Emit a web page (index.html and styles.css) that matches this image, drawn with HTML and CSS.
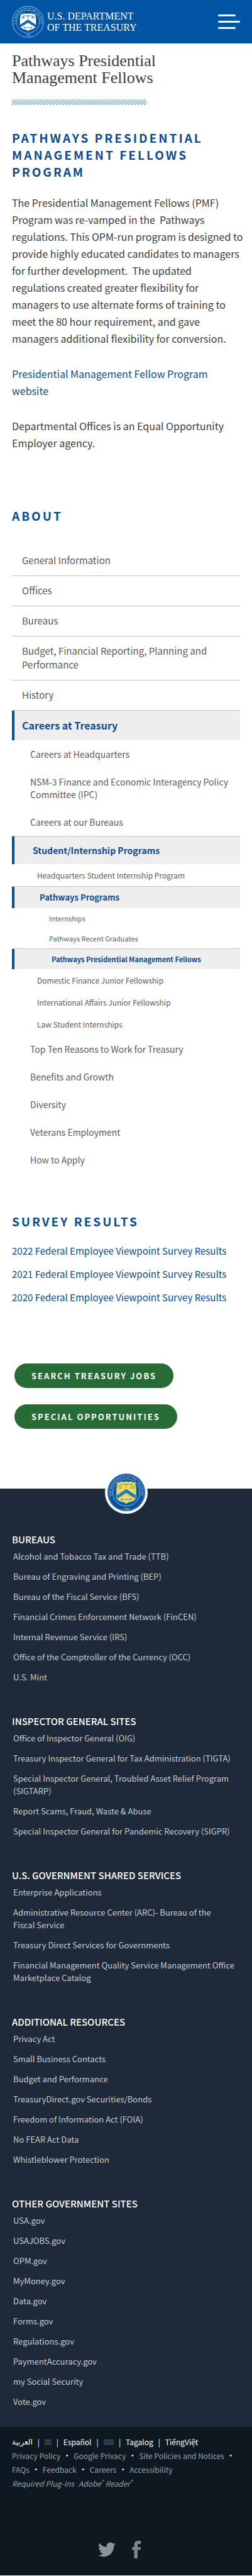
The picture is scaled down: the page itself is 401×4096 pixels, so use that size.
FILE: index.html
```html
<!DOCTYPE html>
<html lang="en">
<head>
<meta charset="utf-8">
<meta name="viewport" content="width=device-width, initial-scale=1">
<title>Pathways Presidential Management Fellows | U.S. Department of the Treasury</title>
<link rel="stylesheet" href="styles.css">
</head>
<body>
<header class="site-header">
  <a class="brand" href="#">
    <svg class="brand-seal" viewBox="0 0 52 52" aria-hidden="true">
      <defs>
        <path id="arc-head" d="M8.400 36.200 A20.300 20.300 0 1 1 43.600 36.200"/>
        <path id="arc-head-foot" d="M14 45.800 A23.200 23.200 0 0 0 38 45.800"/>
      </defs>
      <g fill="none" stroke="#c9dcf0">
        <circle cx="26" cy="26" r="25.2" stroke-width="0.8"/>
        <circle cx="26" cy="26" r="18.600" stroke-width="0.7"/>
      </g>
      <text class="seal-text"><textPath href="#arc-head" startOffset="50%" text-anchor="middle">THE DEPARTMENT OF THE TREASURY</textPath></text>
      <text class="seal-text"><textPath href="#arc-head-foot" startOffset="50%" text-anchor="middle">1789</textPath></text>
      <path fill="#fff" d="M14 13.500 Q17 15 19.500 12.500 Q23 14 26 12.500 Q29 14 32.500 12.500 Q35 15 38 13.500 Q37.500 18 39 20 V30 Q39 37 32 38.500 Q28 39 26 41 Q24 39 20 38.500 Q13 37 13 30 V20 Q14.500 18 14 13.500Z"/>
      <path fill="#0254a5" d="M26 22.500 L39 31 V35.500 L26 27.500 L13 35.500 V31Z"/>
      <path fill="none" stroke="#fff" stroke-width="0.900" stroke-dasharray="1 1.600" d="M13.500 33 L26 25 L38.500 33"/>
      <path fill="none" stroke="#0254a5" stroke-width="0.800" d="M18 16.500H34M26 15V21M18 16.500L16 20.500H20L18 16.500M34 16.500L32 20.500H36L34 16.500M19 35.500H33M20 34V37M32 34.500V37"/>
    </svg>
    <span class="brand-name">U.S. DEPARTMENT<br>OF THE TREASURY</span>
  </a>
  <button class="menu-toggle" type="button" aria-label="Menu">
    <span class="bar bar-short"></span>
    <span class="bar"></span>
    <span class="bar bar-short"></span>
  </button>
</header>

<main class="content">
  <h1 class="page-title">Pathways Presidential Management Fellows</h1>
  <svg class="stripes" aria-hidden="true">
    <defs>
      <pattern id="hatch" width="5" height="9" patternUnits="userSpaceOnUse">
        <path d="M-10 9L3 0M-5 9L8 0M0 9L13 0" stroke="#5b9bd0" stroke-width="1.100"/>
      </pattern>
    </defs>
    <rect width="100%" height="9" fill="url(#hatch)"/>
  </svg>

  <h2 class="section-title">Pathways Presidential Management Fellows Program</h2>
  <div class="prose">
    <p>The Presidential Management Fellows (PMF) Program was re-vamped in the&nbsp; Pathways regulations. This OPM-run program is designed to provide highly educated candidates to managers for further development.&nbsp; The updated regulations created greater flexibility for managers to use alternate forms of training to meet the 80 hour requirement, and gave managers additional flexibility for conversion.</p>
    <p><a href="#">Presidential Management Fellow Program website</a></p>
    <p>Departmental Offices is an Equal Opportunity Employer agency.</p>
  </div>

  <nav class="about" aria-labelledby="about-title">
    <h2 class="section-title" id="about-title">About</h2>
    <ul class="menu">
      <li><a class="l1" href="#">General Information</a></li>
      <li><a class="l1" href="#">Offices</a></li>
      <li><a class="l1" href="#">Bureaus</a></li>
      <li><a class="l1" href="#">Budget, Financial Reporting, Planning and Performance</a></li>
      <li><a class="l1" href="#">History</a></li>
      <li><a class="l1 active" href="#">Careers at Treasury</a>
        <ul>
          <li><a class="l2" href="#">Careers at Headquarters</a></li>
          <li><a class="l2" href="#">NSM-3 Finance and Economic Interagency Policy Committee (IPC)</a></li>
          <li><a class="l2" href="#">Careers at our Bureaus</a></li>
          <li><a class="l2 active" href="#">Student/Internship Programs</a>
            <ul>
              <li><a class="l3" href="#">Headquarters Student Internship Program</a></li>
              <li><a class="l3 active" href="#">Pathways Programs</a>
                <ul>
                  <li><a class="l4" href="#">Internships</a></li>
                  <li><a class="l4" href="#">Pathways Recent Graduates</a></li>
                  <li><a class="l4 active" href="#" aria-current="page">Pathways Presidential Management Fellows</a></li>
                </ul>
              </li>
              <li><a class="l3" href="#">Domestic Finance Junior Fellowship</a></li>
              <li><a class="l3" href="#">International Affairs Junior Fellowship</a></li>
              <li><a class="l3" href="#">Law Student Internships</a></li>
            </ul>
          </li>
          <li><a class="l2" href="#">Top Ten Reasons to Work for Treasury</a></li>
          <li><a class="l2" href="#">Benefits and Growth</a></li>
          <li><a class="l2" href="#">Diversity</a></li>
          <li><a class="l2" href="#">Veterans Employment</a></li>
          <li><a class="l2" href="#">How to Apply</a></li>
        </ul>
      </li>
    </ul>
  </nav>

  <section class="survey">
    <h2 class="section-title">Survey Results</h2>
    <ul class="survey-list">
      <li><a href="#">2022 Federal Employee Viewpoint Survey Results</a></li>
      <li><a href="#">2021 Federal Employee Viewpoint Survey Results</a></li>
      <li><a href="#">2020 Federal Employee Viewpoint Survey Results</a></li>
    </ul>
  </section>

  <div class="actions">
    <a class="pill" href="#">Search Treasury Jobs</a>
    <a class="pill" href="#">Special Opportunities</a>
  </div>
</main>

<footer class="site-footer">
  <svg class="footer-seal" viewBox="0 0 70 70" aria-hidden="true">
    <defs>
      <path id="arc-foot" d="M14.500 48.500 A24.600 24.600 0 1 1 55.500 48.500"/>
      <path id="arc-foot-low" d="M21 60.300 A28.800 28.800 0 0 0 49 60.300"/>
    </defs>
    <circle cx="35" cy="35" r="35" fill="#fff"/>
    <circle cx="35" cy="35" r="31" fill="#0b4f96"/>
    <circle cx="35" cy="35" r="29.800" fill="none" stroke="#8fb8dc" stroke-width="0.600"/>
    <circle cx="35" cy="35" r="22.500" fill="#0f5aa6" stroke="#bcd6ea" stroke-width="0.800"/>
    <text class="seal-text seal-text-lg"><textPath href="#arc-foot" startOffset="50%" text-anchor="middle">THE DEPARTMENT OF THE TREASURY</textPath></text>
    <text class="seal-text seal-text-lg"><textPath href="#arc-foot-low" startOffset="50%" text-anchor="middle">1789</textPath></text>
    <path fill="#ecdc5a" stroke="#7fc0a0" stroke-width="0.700" d="M20 18.500 Q24 20.500 27 17 Q31 19 35 17 Q39 19 43 17 Q46 20.500 50 18.500 Q49.500 24 51 27 V40 Q51 49 42 50.500 Q37.500 51 35 53.500 Q32.500 51 28 50.500 Q19 49 19 40 V27 Q20.500 24 20 18.500Z"/>
    <path fill="#1c66b0" stroke="#8cc4dc" stroke-width="0.700" d="M35 29.500 L51 40 V46 L35 36 L19 46 V40Z"/>
    <path fill="none" stroke="#cde4ee" stroke-dasharray="1.400 2" d="M20 42.500L35 33L50 42.500"/>
    <path fill="none" stroke="#8a8a3c" stroke-width="0.900" d="M25 22H45M35 20V27M25 22L22 28H28L25 22M45 22L42 28H48L45 22"/>
    <path fill="none" stroke="#3e7f9c" stroke-width="1.100" d="M26 46.500H44M27 44.500V48.500M43 45V48"/>
  </svg>

  <div class="link-groups">
    <section>
      <h3>Bureaus</h3>
      <ul>
        <li><a href="#">Alcohol and Tobacco Tax and Trade (TTB)</a></li>
        <li><a href="#">Bureau of Engraving and Printing (BEP)</a></li>
        <li><a href="#">Bureau of the Fiscal Service (BFS)</a></li>
        <li><a href="#">Financial Crimes Enforcement Network (FinCEN)</a></li>
        <li><a href="#">Internal Revenue Service (IRS)</a></li>
        <li><a href="#">Office of the Comptroller of the Currency (OCC)</a></li>
        <li><a href="#">U.S. Mint</a></li>
      </ul>
    </section>
    <section>
      <h3>Inspector General Sites</h3>
      <ul>
        <li><a href="#">Office of Inspector General (OIG)</a></li>
        <li><a href="#">Treasury Inspector General for Tax Administration (TIGTA)</a></li>
        <li><a href="#">Special Inspector General, Troubled Asset Relief Program (SIGTARP)</a></li>
        <li><a href="#">Report Scams, Fraud, Waste &amp; Abuse</a></li>
        <li><a href="#">Special Inspector General for Pandemic Recovery (SIGPR)</a></li>
      </ul>
    </section>
    <section>
      <h3>U.S. Government Shared Services</h3>
      <ul>
        <li><a href="#">Enterprise Applications</a></li>
        <li><a href="#">Administrative Resource Center (ARC)- Bureau of the Fiscal&nbsp;Service</a></li>
        <li><a href="#">Treasury Direct Services for Governments</a></li>
        <li><a href="#">Financial Management Quality Service Management Office Marketplace Catalog</a></li>
      </ul>
    </section>
    <section>
      <h3>Additional Resources</h3>
      <ul>
        <li><a href="#">Privacy Act</a></li>
        <li><a href="#">Small Business Contacts</a></li>
        <li><a href="#">Budget and Performance</a></li>
        <li><a href="#">TreasuryDirect.gov Securities/Bonds</a></li>
        <li><a href="#">Freedom of Information Act (FOIA)</a></li>
        <li><a href="#">No FEAR Act Data</a></li>
        <li><a href="#">Whistleblower Protection</a></li>
      </ul>
    </section>
    <section>
      <h3>Other Government Sites</h3>
      <ul>
        <li><a href="#">USA.gov</a></li>
        <li><a href="#">USAJOBS.gov</a></li>
        <li><a href="#">OPM.gov</a></li>
        <li><a href="#">MyMoney.gov</a></li>
        <li><a href="#">Data.gov</a></li>
        <li><a href="#">Forms.gov</a></li>
        <li><a href="#">Regulations.gov</a></li>
        <li><a href="#">PaymentAccuracy.gov</a></li>
        <li><a href="#">my Social Security</a></li>
        <li><a href="#">Vote.gov</a></li>
      </ul>
    </section>
  </div>
</footer>

<div class="legal">
  <ul class="languages">
    <li><a href="#" lang="ar">العربية</a></li>
    <li><a class="boxes" href="#">▯▯</a></li>
    <li><a href="#" lang="es">Español</a></li>
    <li><a class="boxes" href="#">▯▯▯</a></li>
    <li><a href="#" lang="tl">Tagalog</a></li>
    <li><a href="#" lang="vi">TiếngViệt</a></li>
  </ul>
  <ul class="policies">
    <li><a href="#">Privacy Policy</a></li>
    <li><a href="#">Google Privacy</a></li>
    <li><a href="#">Site Policies and Notices</a></li>
    <li><a href="#">FAQs</a></li>
    <li><a href="#">Feedback</a></li>
    <li><a href="#">Careers</a></li>
    <li><a href="#">Accessibility</a></li>
  </ul>
  <p class="plugins"><span>Required Plug-ins</span> <a href="#">Adobe<sup>®</sup> Reader<sup>®</sup></a></p>
  <div class="social">
    <a href="#" aria-label="Twitter">
      <svg width="28" height="28" viewBox="0 0 24 24" aria-hidden="true"><path fill="#8d9499" d="M23.950 4.570a10 10 0 0 1-2.820.770 4.960 4.960 0 0 0 2.160-2.720c-.950.550-2 .950-3.130 1.180a4.920 4.920 0 0 0-8.380 4.480C7.690 8.090 4.070 6.130 1.640 3.160a4.820 4.820 0 0 0-.670 2.480c0 1.710.870 3.210 2.190 4.100a4.900 4.900 0 0 1-2.230-.620v.060a4.920 4.920 0 0 0 3.950 4.830 5 5 0 0 1-2.210.080 4.940 4.940 0 0 0 4.600 3.420A9.870 9.870 0 0 1 0 19.540a13.990 13.990 0 0 0 7.560 2.210c9.050 0 14-7.500 14-13.980 0-.210 0-.420-.020-.630a9.940 9.940 0 0 0 2.460-2.550z"/></svg>
    </a>
    <a href="#" aria-label="Facebook">
      <svg width="14" height="28" viewBox="0 0 14 28" aria-hidden="true"><path fill="#7b868d" d="M14 0V5H11Q9 5 9 7V10H14L13.500 14.500H9V28H3.500V14.500H0V10H3.500V6.500Q3.500 0 10 0Z"/></svg>
    </a>
  </div>
</div>
</body>
</html>
```
FILE: styles.css
```css
* { box-sizing: border-box; }

body {
  margin: 0;
  background: #fff;
  color: #3d3d3f;
  font-family: "Noto Sans CJK SC", "Open Sans", sans-serif;
  font-size: 15px;
  line-height: 27px;
}

h1, h2, h3, p, ul { margin: 0; padding: 0; }
ul { list-style: none; }
a { color: #0b4c92; text-decoration: none; }

/* Header */
.site-header {
  display: flex;
  align-items: center;
  justify-content: space-between;
  padding: 9px 19px;
  background: #0254a5;
}
.brand { display: flex; align-items: center; gap: 5px; color: #fff; }
.brand-seal { width: 51px; height: 51px; }
.brand-name {
  font-family: "Liberation Serif", serif;
  font-size: 16px;
  line-height: 18px;
}
.seal-text {
  fill: #dbe8f4;
  font-family: "Liberation Serif", serif;
  font-size: 4px;
}
.seal-text-lg { font-size: 5px; }
.menu-toggle {
  display: flex;
  flex-direction: column;
  gap: 7px;
  width: 35px;
  padding: 0;
  border: 0;
  background: none;
}
.bar { width: 100%; height: 3px; border-radius: 2px; background: #fff; }
.bar-short { width: 80%; }

/* Content */
.content { padding: 14px 19px 95px; }
.page-title {
  max-width: 280px;
  color: #3d3d3f;
  font-family: "Liberation Serif", serif;
  font-size: 26px;
  font-weight: 400;
  line-height: 27px;
}
.stripes { display: block; width: 214px; height: 9px; margin: 21px 0 38px; }
.section-title {
  color: #0b4c92;
  font-size: 19px;
  font-weight: 700;
  letter-spacing: 3px;
  line-height: 27px;
  text-transform: uppercase;
}
.prose {
  display: grid;
  gap: 29px;
  margin: 23px -5px 0 0;
  font-size: 16px;
}

/* Side menu */
.about { margin-top: 88px; }
.menu { margin-top: 35px; }
.menu a { display: block; color: #5b5b5d; }
.l1 {
  padding: 12px 16px 13px;
  border-bottom: 1px solid #c3c3c5;
  line-height: 22px;
}
.l2 { padding: 12px 16px 12px 29px; font-size: 14px; line-height: 20px; }
.l3 { padding: 8px 16px 7px 40px; font-size: 12px; line-height: 20px; }
.l4 { padding: 6px 16px 6px 59px; font-size: 11px; line-height: 20px; }
.menu .active {
  border-top: 1px solid #c3c3c5;
  border-bottom: 0;
  background: linear-gradient(to right, #0b4c92 4px, #eee 4px);
  color: #0b4c92;
  font-weight: 700;
}
.l1.active { margin-top: -1px; font-size: 16px; }
.l2.active { padding-left: 33px; }
.l3.active { padding: 7px 16px 7px 44px; font-size: 13px; }
.l4.active { padding-left: 63px; }

/* Survey links and buttons */
.survey { margin-top: 62px; }
.survey-list { display: grid; gap: 10px; margin-top: 20px; }
.actions {
  display: flex;
  flex-direction: column;
  align-items: flex-start;
  gap: 26px;
  margin-top: 92px;
  padding-left: 4px;
}
.pill {
  padding: 6px 27px;
  border-radius: 20px;
  background: #276c34;
  color: #fff;
  font-size: 13px;
  font-weight: 700;
  letter-spacing: 2px;
  text-transform: uppercase;
}

/* Footer */
.site-footer {
  display: flex;
  flex-direction: column;
  padding: 0 19px 30px;
  background: #1e2939;
}
.footer-seal { align-self: center; width: 68px; height: 68px; margin-top: -28px; }
.link-groups { display: grid; gap: 50px; margin-top: 31px; }
.link-groups h3 {
  margin-bottom: 7px;
  color: #fff;
  font-size: 15px;
  font-weight: 500;
  line-height: 20px;
  text-transform: uppercase;
}
.link-groups ul { display: grid; gap: 12px; padding-left: 2px; }
.link-groups li { font-size: 13px; line-height: 20px; }
.link-groups a { color: #c6ccd2; }

/* Legal bar */
.legal {
  padding: 13px 10px 27px 19px;
  background: #0d1820;
  color: #fff;
  font-size: 12px;
  line-height: 22px;
}
.legal ul { display: flex; flex-wrap: wrap; }
.legal li { display: flex; height: 22px; }
.legal li:not(:last-child)::after {
  content: "|";
  width: 19px;
  text-align: center;
}
.legal .policies li:not(:last-child)::after {
  content: "•";
  width: 21px;
  font-family: "Open Sans", sans-serif;
}
.languages a { color: #fff; }
.languages a[lang="ar"] { font-family: "DejaVu Sans", sans-serif; }
.languages .boxes { color: #9aa3a9; font-family: "DejaVu Sans", sans-serif; font-size: 10px; }
.policies a, .plugins, .plugins a { color: #98a1a8; }
.plugins { display: flex; gap: 7px; font-style: italic; }
.plugins sup { font-size: 8px; line-height: 0; }
.social {
  display: flex;
  justify-content: center;
  gap: 26px;
  margin-top: 80px;
  padding-right: 30px;
}
.social svg { display: block; }
```
